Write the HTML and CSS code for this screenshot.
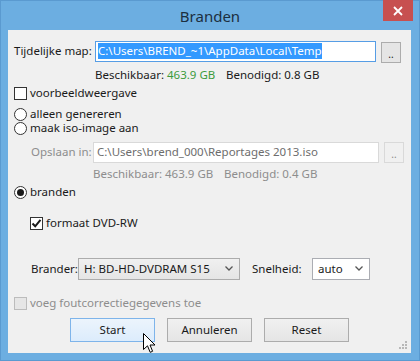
FILE: index.html
```html
<!DOCTYPE html>
<html lang="nl">
<head>
    <meta charset="UTF-8">
    <meta name="viewport" content="width=device-width, initial-scale=1.0">
    <title>Branden</title>
    <link rel="stylesheet" href="styles.css">
</head>
<body>

<div class="window">
    <!-- Titelbalk -->
    <div class="titlebar">
        <span class="title">Branden</span>
        <div class="close">
            <svg width="10" height="10" viewBox="0 0 10 10"><path d="M1 1 L9 9 M9 1 L1 9" stroke="#fff" stroke-width="1.8"/></svg>
        </div>
    </div>

    <div class="client">
        <div class="row row-map">
            <span class="label label-map">Tijdelijke map:</span>
            <div class="textbox focus"><span class="selected">C:\Users\BREND_~1\AppData\Local\Temp</span></div>
            <div class="browse">..</div>
        </div>

        <div class="row row-space">
            <span class="space-a">Beschikbaar: <span class="green">463.9 GB</span></span>
            <span>Benodigd: 0.8 GB</span>
        </div>

        <label class="row row-check">
            <span class="check"></span>
            <span>voorbeeldweergave</span>
        </label>

        <label class="row row-radio">
            <span class="radio"></span>
            <span>alleen genereren</span>
        </label>
        <label class="row row-radio tight">
            <span class="radio"></span>
            <span>maak iso-image aan</span>
        </label>

        <div class="row row-save disabled">
            <span class="label label-save">Opslaan in:</span>
            <div class="textbox grey">C:\Users\brend_000\Reportages 2013.iso</div>
            <div class="browse off">..</div>
        </div>

        <div class="row row-space2 disabled">
            <span class="space-b">Beschikbaar: 463.9 GB</span>
            <span>Benodigd: 0.4 GB</span>
        </div>

        <label class="row row-burn">
            <span class="radio on"></span>
            <span>branden</span>
        </label>

        <label class="row row-format">
            <span class="check on">
                <svg width="11" height="11" viewBox="0 0 11 11"><path d="M1.5 5.5 L4.2 8.3 L9.5 1.8" fill="none" stroke="#1a1a1a" stroke-width="2"/></svg>
            </span>
            <span>formaat DVD-RW</span>
        </label>

        <div class="row row-drive">
            <span class="label label-drive">Brander:</span>
            <div class="select select-drive">
                <span>H: BD-HD-DVDRAM S15</span>
                <svg width="8" height="5" viewBox="0 0 8 5"><path d="M0.5 0.5 L4 4 L7.5 0.5" fill="none" stroke="#555" stroke-width="1.3"/></svg>
            </div>
            <span class="label label-speed">Snelheid:</span>
            <div class="select select-speed">
                <span>auto</span>
                <svg width="8" height="5" viewBox="0 0 8 5"><path d="M0.5 0.5 L4 4 L7.5 0.5" fill="none" stroke="#555" stroke-width="1.3"/></svg>
            </div>
        </div>

        <label class="row row-ecc disabled">
            <span class="check off"></span>
            <span>voeg foutcorrectiegegevens toe</span>
        </label>

        <div class="row row-buttons">
            <div class="button hover">Start</div>
            <div class="button">Annuleren</div>
            <div class="button">Reset</div>
        </div>

        <!-- greep rechtsonder -->
        <svg class="grip" width="9" height="9" viewBox="0 0 9 9">
            <rect x="6" y="0" width="2" height="2" fill="#b8b8b8"/>
            <rect x="3" y="3" width="2" height="2" fill="#b8b8b8"/>
            <rect x="6" y="3" width="2" height="2" fill="#b8b8b8"/>
            <rect x="0" y="6" width="2" height="2" fill="#b8b8b8"/>
            <rect x="3" y="6" width="2" height="2" fill="#b8b8b8"/>
            <rect x="6" y="6" width="2" height="2" fill="#b8b8b8"/>
        </svg>

        <!-- muiscursor boven de Start knop -->
        <svg class="cursor" width="13" height="21" viewBox="0 0 13 21">
            <path d="M0.5 0.5 L0.5 16.5 L4.5 12.8 L7.2 19.3 L9.6 18.3 L7 12 L12 12 Z" fill="#fff" stroke="#000" stroke-width="1"/>
        </svg>
    </div>
</div>

</body>
</html>
```

FILE: styles.css
```css
    body {
        margin: 0;
        background-color: #6aaddf;
        font-family: "Noto Sans", "Open Sans", sans-serif;
        font-size: 11.5px;
        line-height: 14px;
        color: #1a1a1a;
    }
    .window {
        width: 418px;
        height: 359px;
        border: 1px solid #5a9ad0;
        background-color: #6caee1;
        display: flex;
        flex-direction: column;
    }
    .titlebar {
        height: 29px;
        display: flex;
        justify-content: center;
        align-items: center;
        position: relative;
    }
    .title {
        font-size: 15px;
        line-height: 18px;
        color: #1c2f40;
        margin-top: 1px;
    }
    .close {
        position: absolute;
        top: -1px;
        right: 6px;
        width: 30px;
        height: 21px;
        background-color: #c75050;
        display: flex;
        justify-content: center;
        align-items: center;
    }
    .client {
        margin-left: 7px;
        width: 403px;
        height: 323px;
        background-color: #f0f0f0;
        box-sizing: border-box;
        padding-top: 10px;
        position: relative;
        display: flex;
        flex-direction: column;
    }
    .row {
        display: flex;
        align-items: center;
        white-space: nowrap;
    }
    .row-map {
        height: 22px;
        padding-left: 6px;
    }
    .label-map {
        width: 81px;
    }
    .textbox {
        box-sizing: border-box;
        height: 21px;
        width: 281px;
        border: 1px solid #abadb3;
        background-color: #fff;
        display: flex;
        align-items: center;
        padding-left: 2px;
        overflow: hidden;
    }
    .textbox.focus {
        border-color: #569de5;
    }
    .selected {
        background-color: #3399ff;
        color: #fff;
        line-height: 16px;
    }
    .textbox.grey {
        width: 286px;
        border-color: #d9d9d9;
        color: #6d6d6d;
        padding-left: 3px;
    }
    .browse {
        box-sizing: border-box;
        width: 20px;
        height: 21px;
        margin-left: 5px;
        margin-top: 2px;
        border: 1px solid #acacac;
        background-color: #e5e5e5;
        font-size: 10px;
        display: flex;
        justify-content: center;
        align-items: center;
        padding-top: 4px;
    }
    .browse.off {
        margin-top: 0;
        border-color: #d9d9d9;
        background-color: #f0f0f0;
        color: #8a8a8a;
    }
    .row-space {
        height: 16px;
        margin-top: 5px;
        padding-left: 87px;
    }
    .space-a {
        width: 131px;
    }
    .green {
        color: #3c9b3c;
    }
    .row-check {
        height: 16px;
        margin-top: 2px;
        padding-left: 6px;
    }
    .check, .radio {
        box-sizing: border-box;
        width: 13px;
        height: 13px;
        border: 1px solid #333;
        background-color: #fff;
        margin-right: 3px;
        display: flex;
        justify-content: center;
        align-items: center;
    }
    .radio {
        border-radius: 50%;
    }
    .radio.on::after {
        content: "";
        width: 7px;
        height: 7px;
        border-radius: 50%;
        background-color: #1a1a1a;
    }
    .check.off {
        border-color: #bcbcbc;
        background-color: #e6e6e6;
    }
    .row-radio {
        height: 14px;
        margin-top: 6px;
        padding-left: 6px;
    }
    .row-radio.tight {
        margin-top: 0;
    }
    .disabled {
        color: #8d8d8d;
    }
    .row-save {
        height: 22px;
        margin-top: 6px;
        padding-left: 23px;
    }
    .label-save {
        width: 62px;
    }
    .row-space2 {
        height: 16px;
        margin-top: 3px;
        padding-left: 85px;
    }
    .space-b {
        width: 131px;
    }
    .row-burn {
        height: 16px;
        margin-top: 2px;
        padding-left: 6px;
    }
    .row-format {
        height: 16px;
        margin-top: 15px;
        padding-left: 22px;
    }
    .row-drive {
        height: 23px;
        margin-top: 26px;
        padding-left: 23px;
    }
    .label-drive {
        width: 47px;
    }
    .select {
        box-sizing: border-box;
        height: 22px;
        border: 1px solid #acacac;
        display: flex;
        align-items: center;
        justify-content: space-between;
        padding: 0 6px 0 5px;
    }
    .select-drive {
        width: 162px;
        background: linear-gradient(#f0f0f0, #e5e5e5);
    }
    .label-speed {
        margin-left: 12px;
        width: 60px;
    }
    .select-speed {
        width: 58px;
        background-color: #fff;
        border-color: #abadb3;
    }
    .row-ecc {
        height: 16px;
        margin-top: 15px;
        padding-left: 6px;
    }
    .row-buttons {
        margin-top: 7px;
        padding-left: 62px;
        gap: 12px;
    }
    .button {
        box-sizing: border-box;
        width: 85px;
        height: 24px;
        border: 1px solid #acacac;
        background: linear-gradient(#f0f0f0, #e5e5e5);
        display: flex;
        justify-content: center;
        align-items: center;
    }
    .button.hover {
        border-color: #7eb4ea;
        background: linear-gradient(#ecf4fc, #dcecfc);
    }
    .grip {
        position: absolute;
        right: 3px;
        bottom: 3px;
    }
    .cursor {
        position: absolute;
        left: 135px;
        top: 303px;
    }
```
